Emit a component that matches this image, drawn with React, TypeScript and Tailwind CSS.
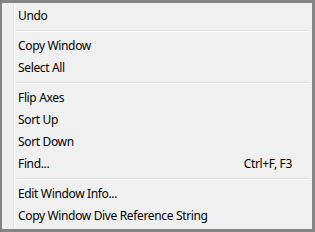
const ITEMS: (null | { label: string; shortcut?: string })[] = [
  { label: "Undo" },
  null,
  { label: "Copy Window" },
  { label: "Select All" },
  null,
  { label: "Flip Axes" },
  { label: "Sort Up" },
  { label: "Sort Down" },
  { label: "Find...", shortcut: "Ctrl+F, F3" },
  null,
  { label: "Edit Window Info..." },
  { label: "Copy Window Dive Reference String" },
];

export default function App() {
  return (
    <div
      className="h-[232px] w-[315px] border-t-[3px] border-r-[3px] border-b-[3px] border-l-[2px] border-[#848484] bg-[#f0f0f0] p-[2px] text-[12px] tracking-[-0.35px] text-black"
      style={{ fontFamily: '"Noto Sans", "Open Sans", sans-serif' }}
    >
      <div className="relative h-full">
        {/* icon gutter */}
        <div className="absolute top-0 bottom-0 left-[9px] w-[2px] border-l border-[#e2e3e3] bg-white" />
        {ITEMS.map((it, i) =>
          it === null ? (
            <div key={i} className="relative flex h-[8px] items-center pl-[11px] pr-[1px]">
              <div className="h-[2px] w-full border-t border-[#e0e0e0] bg-white" />
            </div>
          ) : (
            <div key={i} className="relative flex h-[22px] items-center pl-[14px] pr-[18px]">
              <span className="flex-1 whitespace-nowrap">{it.label}</span>
              {it.shortcut && <span className="whitespace-nowrap">{it.shortcut}</span>}
            </div>
          )
        )}
      </div>
    </div>
  );
}
